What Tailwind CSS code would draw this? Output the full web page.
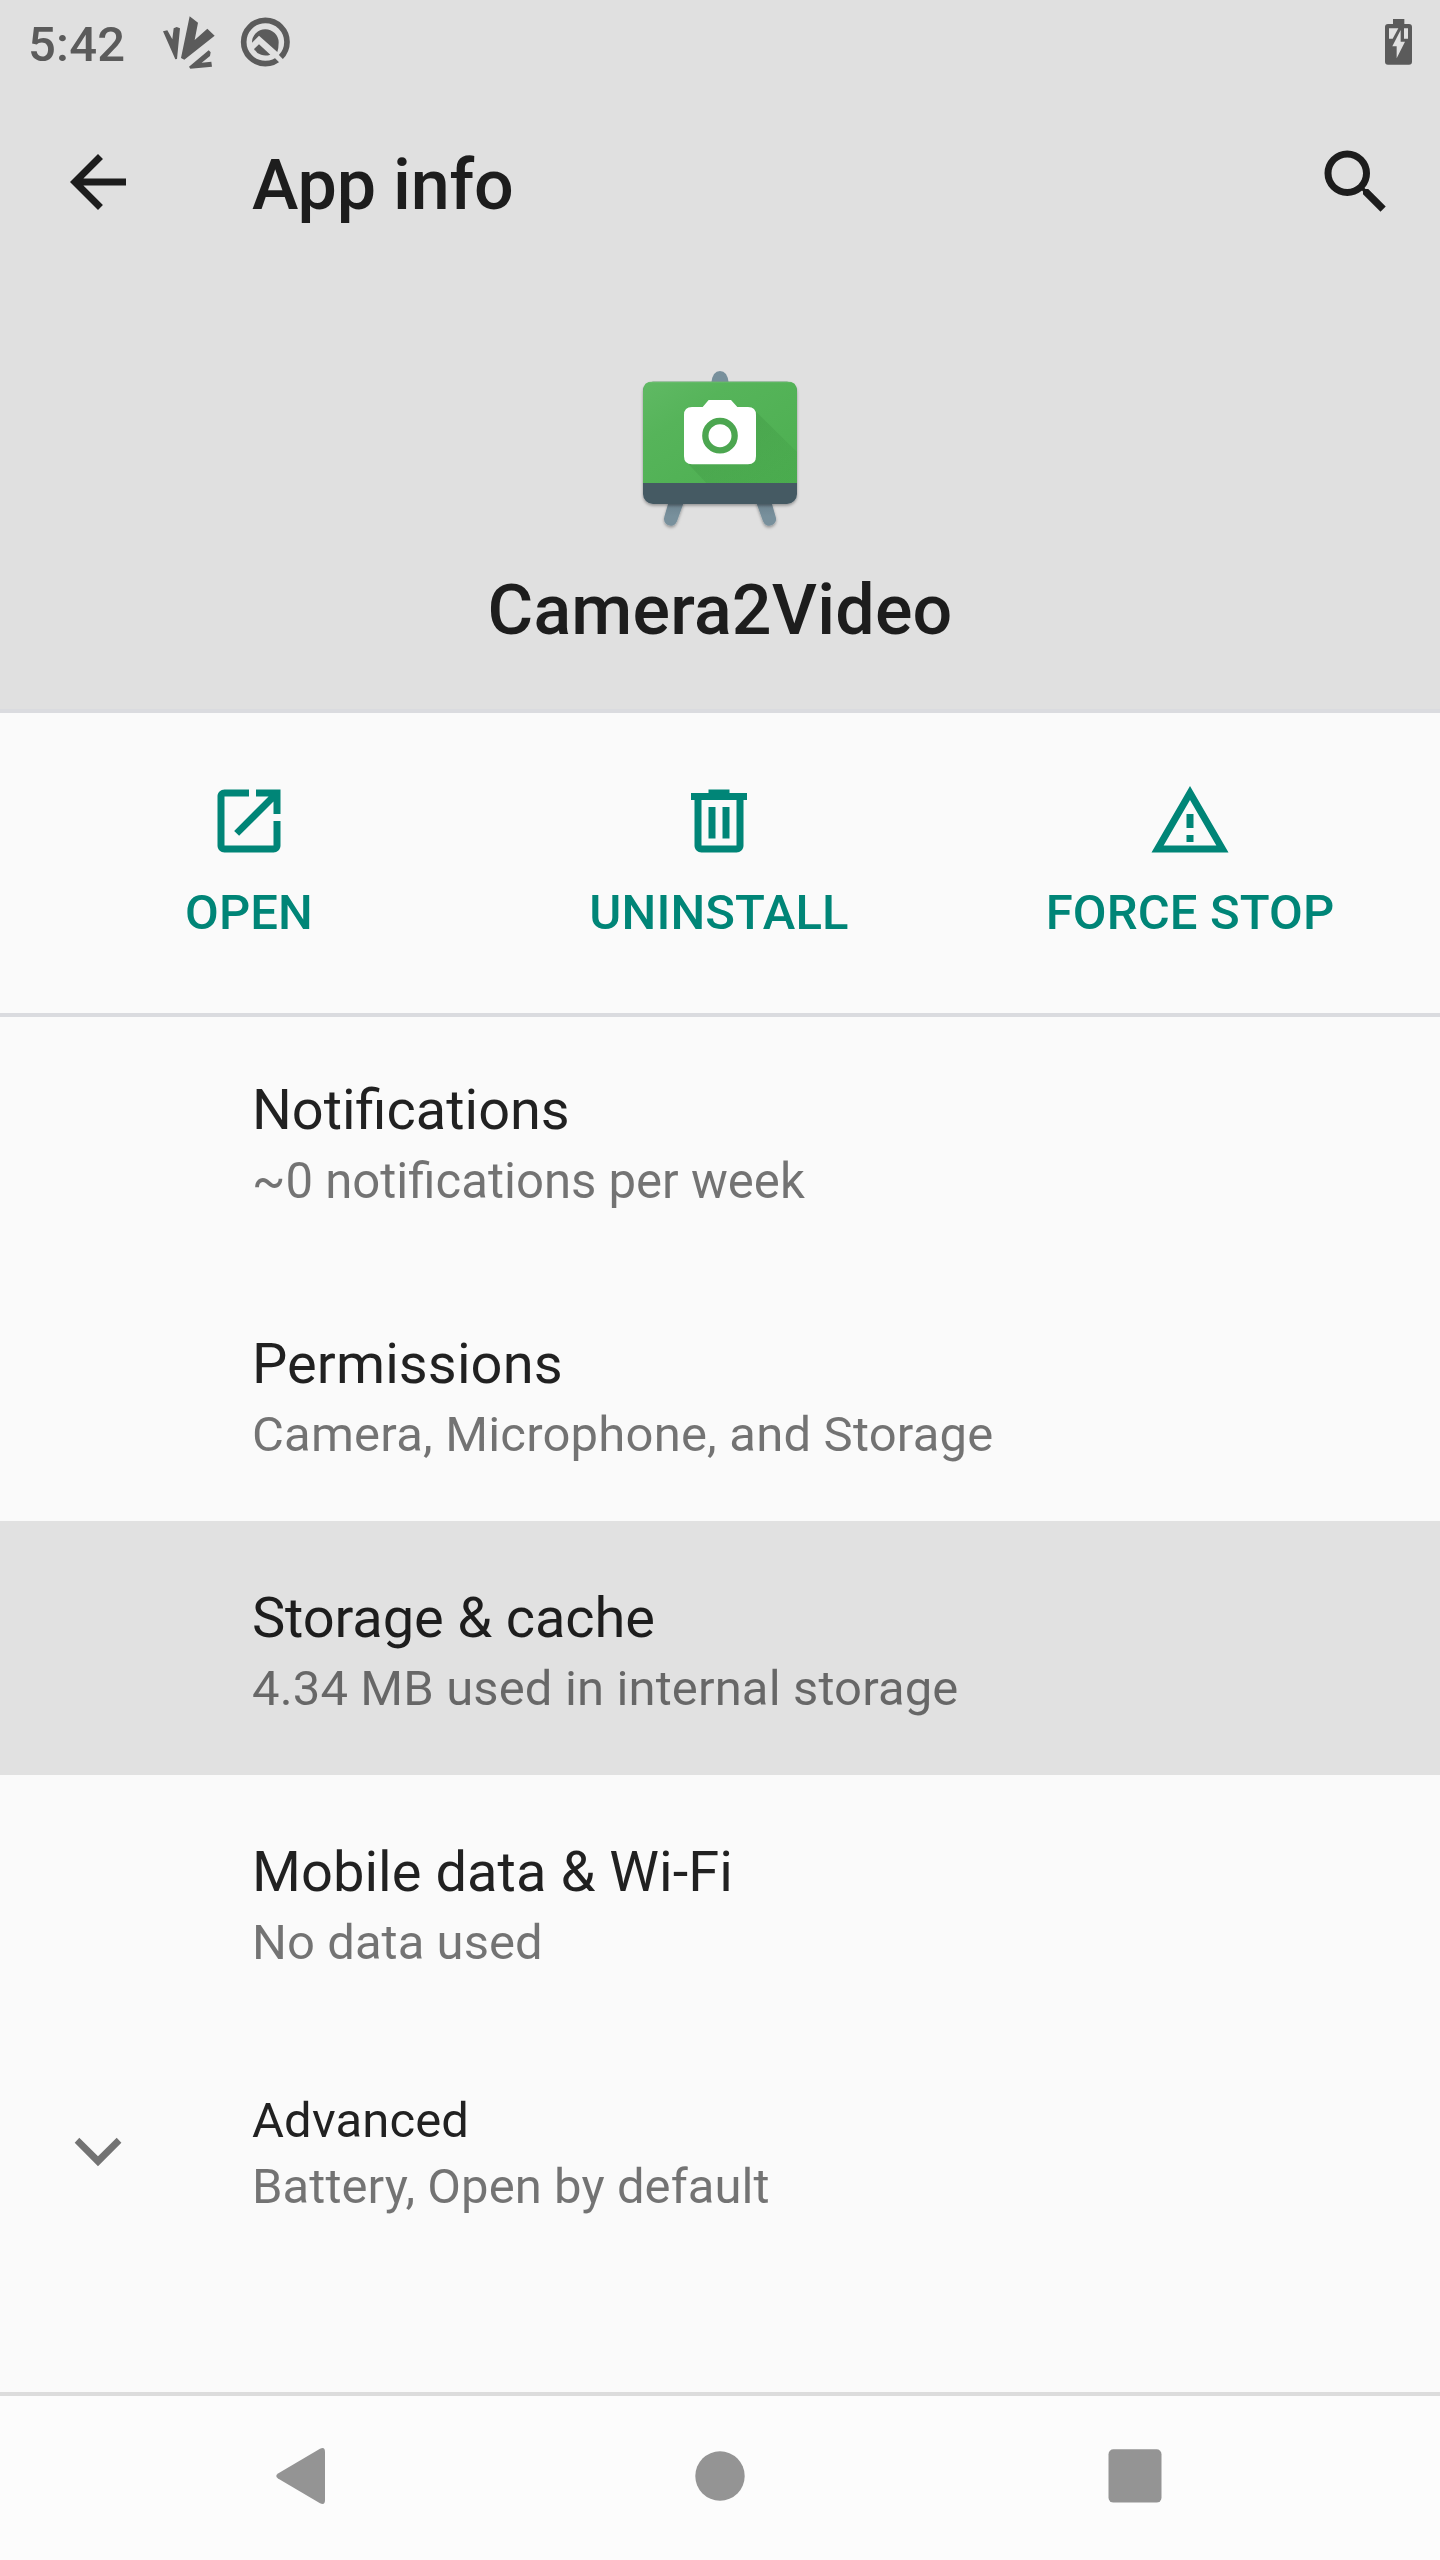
<!DOCTYPE html>
<html lang="en">
<head>
<meta charset="utf-8">
<title>App info</title>
<script src="https://cdn.jsdelivr.net/npm/@tailwindcss/browser@4"></script>
</head>
<body class="bg-[#fafafa]">
<div class="flex h-[2560px] w-[1440px] flex-col overflow-hidden bg-[#fafafa] font-['Roboto',sans-serif] text-black/87">

  <header class="flex h-[713px] flex-col border-b-4 border-[#dadbdf] bg-[#e0e0e0]">
    <!-- Status bar -->
    <div class="flex h-[84px] shrink-0 items-start pt-[15px] pl-7 text-[#5b5b5b]">
      <span class="w-[132px] text-[49px] leading-[60px] font-medium tracking-[0.2px]">5:42</span>
      <svg class="h-[56px] w-[56px] shrink-0" viewBox="480 45 168 168" fill="currentColor">
        <path d="M489 94L502 91L517 118L521 85L530 81L540 85L531 177L526 178Z"/>
        <path d="M569 49L594 68L584 120L622 86L644 107L553 179L543 174Z"/>
        <path d="M567 200L626 151L632 157L630 168L605 188L634 185L636 200L571 206Z"/>
      </svg>
      <svg class="ml-[22px] h-[56px] w-[56px] shrink-0" viewBox="714 45 168 168">
        <circle cx="796" cy="126" r="65" fill="none" stroke="currentColor" stroke-width="17"/>
        <path d="M815 154L855 194" stroke="#e0e0e0" stroke-width="15"/>
        <path fill="currentColor" d="M756 128A40 40 0 0 1 836 127Q836 144 832 156L777 107Z"/>
        <path fill="currentColor" d="M762 147L777 133L811 164A40 40 0 0 1 762 147Z"/>
      </svg>
      <svg class="mr-[20px] ml-auto h-[56px] w-[40px]" viewBox="120 45 120 168">
        <path fill="currentColor" d="M159 57H193V72H207Q216 72 216 81V185Q216 194 207 194H144Q135 194 135 185V81Q135 72 144 72H159Z"/>
        <path fill="#e0e0e0" d="M147 85H175L158 116H147ZM192 85H204V116H192ZM182 90V125H195L170 175V139H157Z"/>
      </svg>
    </div>
    <!-- Toolbar -->
    <div class="flex h-[196px] shrink-0 items-center pr-[42px] pl-14">
      <svg class="h-[84px] w-[84px]" viewBox="0 0 24 24" fill="currentColor"><path d="M20 11H7.83l5.59-5.59L12 4l-8 8 8 8 1.41-1.41L7.83 13H20v-2z"/></svg>
      <h1 class="ml-28 pt-1.5 text-[70px] leading-[82px] font-medium tracking-[-0.2px]">App info</h1>
      <svg class="ml-auto h-[84px] w-[84px]" viewBox="0 0 24 24" fill="currentColor"><path d="M15.5 14h-.79l-.28-.27A6.471 6.471 0 0 0 16 9.5 6.5 6.5 0 1 0 9.5 16c1.61 0 3.09-.59 4.23-1.57l.27.28v.79l5 4.99L20.49 19l-4.99-5zm-6 0C7.01 14 5 11.99 5 9.5S7.01 5 9.5 5 14 7.01 14 9.5 11.99 14 9.5 14z"/></svg>
    </div>
    <!-- App identity -->
    <div class="flex flex-col items-center pt-[86px]">
      <svg class="h-[168px] w-[168px]" viewBox="108 48 504 504">
        <defs>
          <linearGradient id="board" x1="0" y1="0" x2="1" y2="1">
            <stop offset="0" stop-color="#60b964"/><stop offset=".3" stop-color="#56b45a"/><stop offset="1" stop-color="#4caf50"/>
          </linearGradient>
          <linearGradient id="shade" x1="0" y1="0" x2="1" y2="1">
            <stop offset="0" stop-color="#2f7a33" stop-opacity=".3"/><stop offset="1" stop-color="#388e3c" stop-opacity=".1"/>
          </linearGradient>
          <linearGradient id="leg" x1="0" y1="0" x2="0" y2="1">
            <stop offset="0" stop-color="#6a818d"/><stop offset=".6" stop-color="#78909c"/>
          </linearGradient>
          <filter id="drop" x="-20%" y="-20%" width="140%" height="150%"><feDropShadow dx="0" dy="5" stdDeviation="4" flood-opacity=".35"/></filter>
          <clipPath id="face"><path d="M129 399V124Q129 94 159 94H561Q591 94 591 124V399Z"/></clipPath>
        </defs>
        <g filter="url(#drop)" fill="url(#leg)">
          <path d="M206 455L193 500A20 20 0 0 0 231 514L252 455Z"/>
          <path d="M514 455L527 500A20 20 0 0 1 489 514L468 455Z"/>
        </g>
        <path fill="#78909c" d="M334 98Q338 63 360 63Q382 63 386 98Z"/>
        <rect x="129" y="95" width="462" height="367" rx="30" fill="#455a64" filter="url(#drop)"/>
        <g clip-path="url(#face)">
          <rect x="129" y="94" width="462" height="305" fill="url(#board)"/>
          <path fill="url(#shade)" d="M461 178L591 306V399H319L259 336Z"/>
          <path fill="#fff" fill-opacity=".25" d="M129 94H591V97H129Z"/>
        </g>
        <path fill="#fff" d="M326 150H393L412 171H444Q468 171 468 195V319Q468 343 444 343H276Q252 343 252 319V195Q252 171 276 171H308Z"/>
        <circle cx="360" cy="257" r="44" fill="#fff" stroke="#4ca650" stroke-width="19"/>
      </svg>
      <h2 class="mt-[35px] text-[70px] leading-[82px] font-medium tracking-[0.2px]">Camera2Video</h2>
    </div>
  </header>

  <!-- Actions -->
  <div class="grid h-[300px] shrink-0 grid-cols-[470px_470px_472px] px-[14px] pt-[66px] text-[49px] leading-[58px] font-medium tracking-[0.13px] text-[#008577]">
    <div class="flex flex-col items-center gap-[21px]">
      <svg class="h-[84px] w-[84px]" viewBox="0 0 24 24" fill="currentColor"><path d="M19 19H5V5h7V3H5c-1.11 0-2 .9-2 2v14c0 1.1.89 2 2 2h14c1.1 0 2-.9 2-2v-7h-2v7zM14 3v2h3.59l-9.83 9.83 1.41 1.41L19 6.41V10h2V3h-7z"/></svg>
      <span>OPEN</span>
    </div>
    <div class="flex flex-col items-center gap-[21px]">
      <svg class="h-[84px] w-[84px]" viewBox="0 0 24 24" fill="currentColor"><path d="M15 4V3H9v1H4v2h1v13c0 1.1.9 2 2 2h10c1.1 0 2-.9 2-2V6h1V4h-5zm2 15H7V6h10v13zM9 8h2v9H9zM13 8h2v9h-2z"/></svg>
      <span>UNINSTALL</span>
    </div>
    <div class="flex flex-col items-center gap-[21px]">
      <svg class="h-[84px] w-[84px]" viewBox="0 0 24 24" fill="currentColor"><path d="M12 5.99L19.53 19H4.47L12 5.99M12 2L1 21h22L12 2zm1 14h-2v2h2v-2zm0-6h-2v4h2v-4z"/></svg>
      <span>FORCE STOP</span>
    </div>
  </div>

  <!-- Preferences -->
  <main class="flex grow flex-col border-t-4 border-[#dadbdf]">
    <div class="h-[250px] pt-[60px] pl-[252px]">
      <div class="text-[55.9px] leading-[66px]">Notifications</div>
      <div class="mt-[9px] text-[49.1px] leading-[58px] text-black/54">~0 notifications per week</div>
    </div>
    <div class="h-[254px] pt-16 pl-[252px]">
      <div class="text-[56px] leading-[66px] tracking-[0.1px]">Permissions</div>
      <div class="mt-[9px] text-[49px] leading-[58px] tracking-[0.2px] text-black/54">Camera, Microphone, and Storage</div>
    </div>
    <div class="h-[254px] bg-[#e1e1e1] pt-16 pl-[252px]">
      <div class="text-[56px] leading-[66px] tracking-[-0.13px]">Storage &amp; cache</div>
      <div class="mt-[9px] text-[49px] leading-[58px] tracking-[0.13px] text-black/54">4.34 MB used in internal storage</div>
    </div>
    <div class="h-[254px] pt-16 pl-[252px]">
      <div class="text-[56px] leading-[66px] tracking-[0.05px]">Mobile data &amp; Wi-Fi</div>
      <div class="mt-[9px] text-[49px] leading-[58px] tracking-[0.05px] text-black/54">No data used</div>
    </div>
    <div class="flex items-center pt-[63px] pl-14">
      <svg class="mb-1 h-[84px] w-[84px] text-black/54" viewBox="56 2110 84 84" fill="currentColor"><path d="M79.3 2137.7L98 2156.3L116.7 2137.7L121.4 2142.7L98 2166.3L74.7 2142.7Z"/></svg>
      <div class="ml-28 text-[49px] leading-[58px]">
        <div class="tracking-[0.15px]">Advanced</div>
        <div class="mt-2 tracking-[0.07px] text-black/54">Battery, Open by default</div>
      </div>
    </div>
  </main>

  <!-- Navigation bar -->
  <nav class="flex h-[168px] shrink-0 items-center justify-between border-t-4 border-[#dcdcdc] bg-[#fcfcfc] pr-[263px] pb-1 pl-[262px] text-[#949494]">
    <svg class="h-[84px] w-[84px]" viewBox="262 2434 84 84" fill="currentColor"><path d="M278 2473.5L320 2448.8Q325 2446.5 325 2452V2500Q325 2505.5 320 2503.2L278 2478.5Q274.5 2476 278 2473.5Z"/></svg>
    <svg class="h-[84px] w-[84px]" viewBox="0 0 84 84" fill="currentColor"><circle cx="42" cy="42" r="24.7"/></svg>
    <svg class="h-[84px] w-[84px]" viewBox="0 0 84 84" fill="currentColor"><rect x="15.5" y="15.3" width="53" height="53.3" rx="5"/></svg>
  </nav>
</div>
</body>
</html>
